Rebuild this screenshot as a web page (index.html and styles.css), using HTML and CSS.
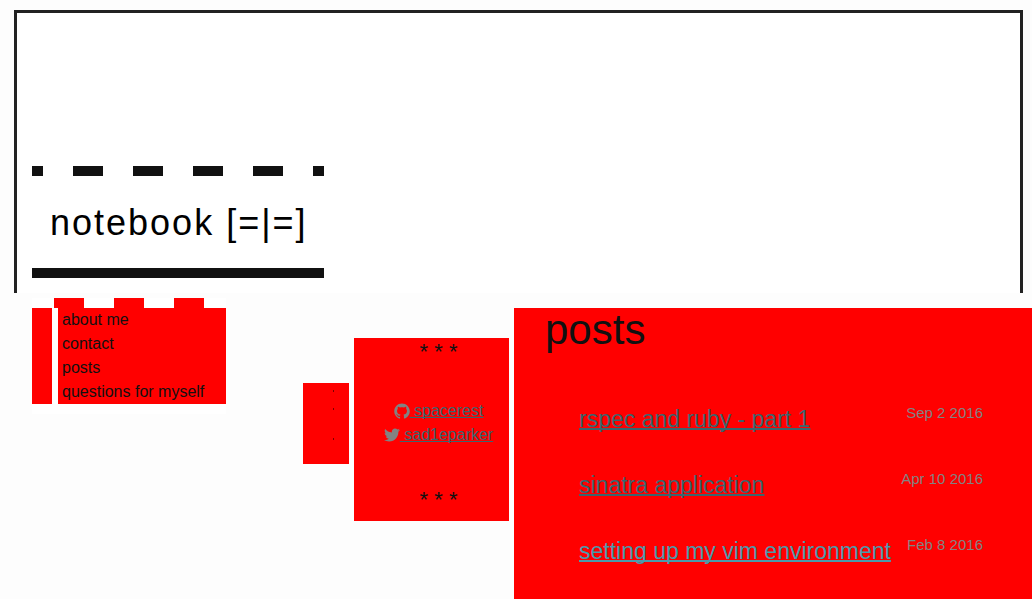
FILE: index.html
```html
<!DOCTYPE html>
<html lang="en">
<head>
<meta charset="utf-8">
<title>notebook</title>
<link rel="stylesheet" href="styles.css">
</head>
<body>
<header class="masthead">
  <div class="brand">
    <div class="dashes brand-dashes"></div>
    <div class="brand-name">notebook [=|=]</div>
  </div>
</header>
<div class="columns">
  <nav class="menu">
    <div class="dashes menu-dashes"></div>
    <div class="menu-body">
      <div class="menu-spine"></div>
      <ul class="menu-list">
        <li><a href="#about">about me</a></li>
        <li><a href="#contact">contact</a></li>
        <li><a href="#posts">posts</a></li>
        <li><a href="#questions">questions for myself</a></li>
      </ul>
    </div>
  </nav>
  <div class="tab">
    <span class="notch"></span>
    <span class="notch"></span>
    <span class="notch notch-far"></span>
  </div>
  <aside class="social">
    <div class="stars">* * *</div>
    <ul class="social-list">
      <li><a href="#github"><svg class="icon" viewBox="0 0 16 16" aria-hidden="true"><path d="M7.999,0.431c-4.285,0-7.76,3.474-7.76,7.761c0,3.428,2.223,6.337,5.307,7.363c0.388,0.071,0.53-0.168,0.53-0.374c0-0.184-0.007-0.672-0.01-1.32c-2.159,0.469-2.614-1.04-2.614-1.04c-0.353-0.896-0.862-1.135-0.862-1.135c-0.705-0.481,0.053-0.472,0.053-0.472c0.779,0.055,1.189,0.8,1.189,0.8c0.692,1.186,1.816,0.843,2.258,0.645c0.071-0.502,0.271-0.843,0.493-1.037C4.86,11.425,3.049,10.76,3.049,7.786c0-0.847,0.302-1.54,0.799-2.082C3.768,5.507,3.501,4.718,3.924,3.65c0,0,0.652-0.209,2.134,0.796C6.677,4.273,7.34,4.187,8,4.184c0.659,0.003,1.323,0.089,1.943,0.261c1.482-1.004,2.132-0.796,2.132-0.796c0.423,1.068,0.157,1.857,0.077,2.054c0.497,0.542,0.798,1.235,0.798,2.082c0,2.981-1.814,3.637-3.543,3.829c0.279,0.24,0.527,0.713,0.527,1.437c0,1.037-0.01,1.874-0.01,2.129c0,0.208,0.14,0.449,0.534,0.373c3.081-1.028,5.302-3.935,5.302-7.362C15.76,3.906,12.285,0.431,7.999,0.431z"/></svg> spacerest</a></li>
      <li><a href="#twitter"><svg class="icon" viewBox="0 0 16 16" aria-hidden="true"><path d="M15.969,3.058c-0.586,0.26-1.217,0.436-1.878,0.515c0.675-0.405,1.194-1.045,1.438-1.809c-0.632,0.375-1.332,0.647-2.076,0.793c-0.596-0.636-1.446-1.033-2.387-1.033c-1.806,0-3.27,1.464-3.27,3.27c0,0.256,0.029,0.506,0.085,0.745C5.163,5.404,2.753,4.102,1.14,2.124C0.859,2.607,0.698,3.168,0.698,3.767c0,1.134,0.577,2.135,1.455,2.722C1.616,6.472,1.112,6.325,0.671,6.08c0,0.014,0,0.027,0,0.041c0,1.584,1.127,2.906,2.623,3.206C3.02,9.402,2.731,9.442,2.433,9.442c-0.211,0-0.416-0.021-0.615-0.059c0.416,1.299,1.624,2.245,3.055,2.271c-1.119,0.877-2.529,1.4-4.061,1.4c-0.264,0-0.524-0.015-0.78-0.046c1.447,0.928,3.166,1.469,5.013,1.469c6.015,0,9.304-4.983,9.304-9.304c0-0.142-0.003-0.283-0.009-0.423C14.976,4.29,15.531,3.714,15.969,3.058z"/></svg> sad1eparker</a></li>
    </ul>
    <div class="stars">* * *</div>
  </aside>
  <main class="posts">
    <h1 class="posts-title">posts</h1>
    <ul class="post-list">
      <li class="post"><a class="post-link" href="#rspec">rspec and ruby - part 1</a><time class="post-date">Sep 2 2016</time></li>
      <li class="post"><a class="post-link" href="#sinatra">sinatra application</a><time class="post-date">Apr 10 2016</time></li>
      <li class="post"><a class="post-link post-link-active" href="#vim">setting up my vim environment</a><time class="post-date">Feb 8 2016</time></li>
    </ul>
  </main>
</div>
</body>
</html>
```

FILE: styles.css
```css
* {
  box-sizing: border-box;
}

body {
  display: flex;
  flex-direction: column;
  min-height: 100vh;
  margin: 0;
  padding-top: 10px;
  background: #fdfdfd;
  color: #111;
  font-family: "Liberation Sans", Arial, sans-serif;
  font-size: 16px;
  line-height: 24px;
}

ul {
  margin: 0;
  padding: 0;
  list-style: none;
}

a {
  text-decoration-skip-ink: none;
}

.masthead {
  margin: 0 9px 0 14px;
  padding: 153px 15px 15px;
  border: 3px solid #222;
  border-bottom: 0;
  background: #fff;
}

.brand {
  width: 292px;
  border-bottom: 10px solid #111;
}

.dashes {
  height: 10px;
  background-position: center;
  background-size: 60px 10px;
}

.brand-dashes {
  background-image: linear-gradient(90deg, #111 15px, transparent 15px, transparent 45px, #111 45px);
}

.brand-name {
  padding: 1px 18px 0;
  color: #000;
  font-size: 36px;
  letter-spacing: 2px;
  line-height: 91px;
  white-space: nowrap;
}

.columns {
  display: flex;
  flex: 1;
  align-items: flex-start;
  padding: 5px 0 0 32px;
}

.menu {
  width: 194px;
  padding-bottom: 10px;
  background: #fff;
}

.menu-dashes {
  background-image: linear-gradient(90deg, transparent 15px, red 15px, red 45px, transparent 45px);
}

.menu-body {
  display: flex;
  gap: 6px;
}

.menu-spine {
  width: 20px;
  background: red;
}

.menu-list {
  flex: 1;
  padding-left: 4px;
  background: red;
}

.menu-list a {
  color: #111;
  text-decoration: none;
}

.tab {
  display: flex;
  flex-direction: column;
  align-items: flex-start;
  gap: 16px;
  width: 46px;
  height: 81px;
  margin: 85px 0 0 77px;
  padding: 7px 0 0 30px;
  background: red;
}

.notch {
  width: 1px;
  height: 2px;
  background: #700;
}

.notch-far {
  margin-top: 12px;
}

.social {
  width: 155px;
  margin: 40px 0 0 5px;
  padding: 0 0 7px 14px;
  background: red;
  text-align: center;
}

.stars {
  font-size: 22px;
  line-height: 28px;
}

.social-list {
  padding: 33px 0 39px;
}

.social-list a {
  color: #3a656e;
  text-decoration: underline;
}

.icon {
  width: 16px;
  height: 16px;
  fill: #828282;
  vertical-align: text-bottom;
}

.posts {
  flex: 1;
  align-self: stretch;
  margin: 10px 0 0 5px;
  padding: 0 49px 0 31px;
  background: red;
}

.posts-title {
  margin: 0;
  font-size: 42px;
  font-weight: 400;
  line-height: 44px;
}

.post-list {
  display: flex;
  flex-direction: column;
  gap: 30px;
  padding: 49px 0 0 34px;
}

.post {
  display: flex;
  justify-content: space-between;
  line-height: 36px;
  white-space: nowrap;
}

.post-link {
  color: #3a656e;
  font-size: 23px;
  text-decoration-thickness: 2px;
}

.post-link-active {
  color: #4a9aac;
}

.post-date {
  color: #828282;
  font-size: 15px;
  line-height: 24px;
}
```
